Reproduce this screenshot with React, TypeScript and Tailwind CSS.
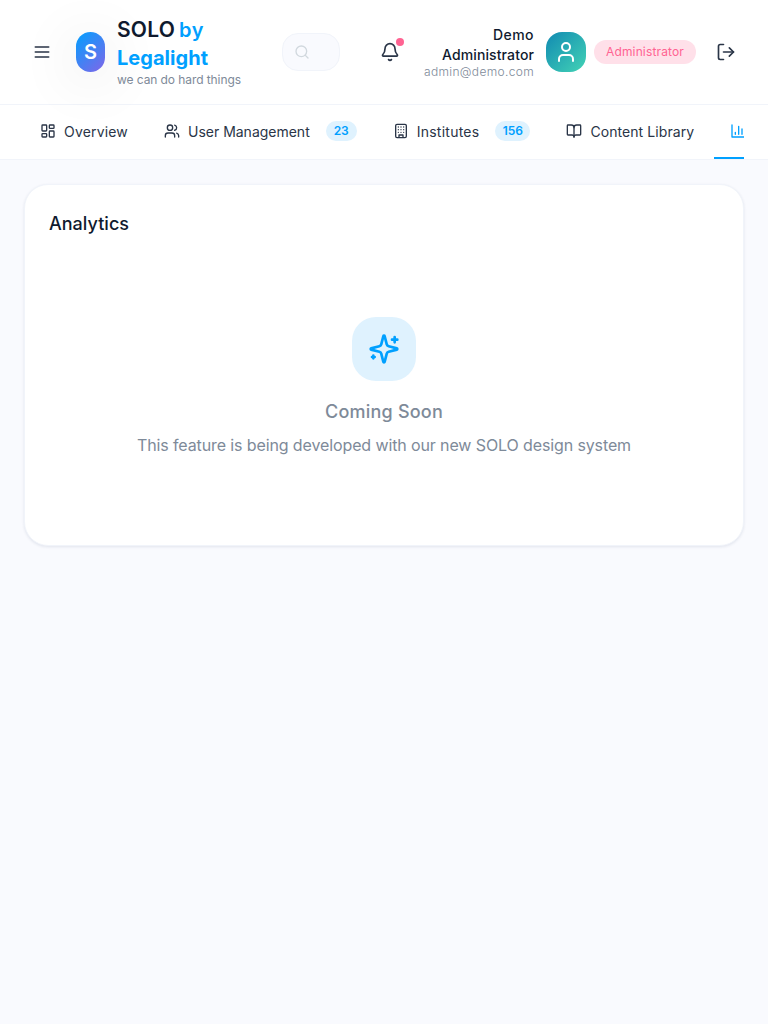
import React from "react";
import { Search, Bell, User, LogOut, LayoutDashboard, Users, BookOpen } from "lucide-react";

type TextProps = { children: React.ReactNode; w: number; size: number; className?: string; right?: boolean };

/* Single line of text fitted to a fixed measure. */
function Line({ children, w, size, className = "", right }: TextProps) {
  const ref = React.useRef<HTMLSpanElement>(null);
  const [ls, setLs] = React.useState(0);
  React.useLayoutEffect(() => {
    const el = ref.current;
    if (!el) return;
    const n = (el.textContent || "").length;
    setLs((w - el.getBoundingClientRect().width) / n);
  }, [w]);
  return (
    <span className={`flex shrink-0 whitespace-nowrap ${right ? "justify-end" : ""} ${className}`} style={{ width: w }}>
      <span ref={ref} className="block shrink-0" style={{ fontSize: size, letterSpacing: ls }}>{children}</span>
    </span>
  );
}

function Stroke({ d, className = "size-4" }: { d: string; className?: string }) {
  return (
    <svg className={`shrink-0 ${className}`} viewBox="0 0 24 24" fill="none" stroke="currentColor" strokeWidth="2" strokeLinecap="round" strokeLinejoin="round">
      <path d={d} />
    </svg>
  );
}

const MENU = "M4 6h16M4 12h16M4 18h16";
const BUILDING = "M6 2h12a2 2 0 0 1 2 2v16a2 2 0 0 1-2 2H6a2 2 0 0 1-2-2V4a2 2 0 0 1 2-2zM9 22v-4h6v4M8 6h.01M16 6h.01M12 6h.01M12 10h.01M12 14h.01M16 10h.01M16 14h.01M8 10h.01M8 14h.01";
const CHART = "M3 3v18h18M18 17V9M13 17V5M8 17v-3";
const SPARKLES = "M9.937 15.5A2 2 0 0 0 8.5 14.063l-6.135-1.582a.5.5 0 0 1 0-.962L8.5 9.936A2 2 0 0 0 9.937 8.5l1.582-6.135a.5.5 0 0 1 .963 0L14.063 8.5A2 2 0 0 0 15.5 9.937l6.135 1.581a.5.5 0 0 1 0 .964L15.5 14.063a2 2 0 0 0-1.437 1.437l-1.582 6.135a.5.5 0 0 1-.963 0zM20 3v4M22 5h-4M4 17v2M5 18H3";

function Tab({ icon, label, w, badge, bw, active }: { icon: React.ReactNode; label: string; w: number; badge?: string; bw?: number; active?: boolean }) {
  return (
    <button className={`flex h-[54px] shrink-0 items-center border-b-2 px-4 ${active ? "border-[#00a0ff] text-[#00a0ff]" : "border-transparent text-[#2a3547]"}`}>
      {icon}
      <Line w={w} size={14} className="ml-2 pt-px leading-5">{label}</Line>
      {badge && (
        <span className="ml-4 flex h-5 items-center justify-center rounded-full bg-[#dff2fe] text-xs font-semibold text-[#00a0ff]" style={{ width: bw }}>
          {badge}
        </span>
      )}
    </button>
  );
}

export default function App() {
  return (
    <div className="min-h-screen overflow-hidden bg-[#f9fafe] font-['Inter',sans-serif] text-[#0f1a2e]">
      <header className="flex h-[105px] items-center border-b border-[#f1f4fa] bg-white px-8">
        <Stroke d={MENU} className="size-5 text-[#2a3547]" />
        <div className="ml-6 flex h-10 w-[29px] shrink-0 items-center justify-center rounded-2xl bg-[linear-gradient(135deg,#00a0ff,#8165e8)] text-xl font-semibold text-white shadow-[0_8px_60px_rgba(0,0,0,0.14)]">
          S
        </div>
        <div className="ml-3 w-[153px] shrink-0">
          <div className="flex gap-1 font-semibold leading-7">
            <Line w={58} size={21}>SOLO</Line>
            <Line w={25} size={20} className="text-[#00a0ff]">by</Line>
          </div>
          <Line w={91} size={20} className="font-bold leading-7 text-[#00a0ff]">Legalight</Line>
          <Line w={124} size={12} className="leading-4 text-[#7e8a99]">we can do hard things</Line>
        </div>
        <div className="ml-3 flex h-[38px] w-[58px] shrink-0 items-center rounded-2xl border border-[#f1f4fa] bg-[#f9fafe] pl-[11px]">
          <Search size={16} className="text-[#d1d8de]" />
        </div>
        <div className="relative ml-10 shrink-0">
          <Bell size={20} className="text-[#2a3547]" />
          <span className="absolute -right-1 -top-1 size-2 rounded-full bg-[#ff6392]" />
        </div>
        <div className="ml-6 flex w-[110px] shrink-0 flex-col items-end pb-px">
          <Line w={41} size={14} right className="font-medium leading-5">Demo</Line>
          <Line w={92} size={14} right className="font-medium leading-5">Administrator</Line>
          <Line w={110} size={12} right className="font-light leading-[14px] text-[#7e8a99]">admin@demo.com</Line>
        </div>
        <div className="ml-3 flex size-10 shrink-0 items-center justify-center rounded-2xl bg-[linear-gradient(135deg,#118ab2,#43d3b5)]">
          <User size={24} className="text-white" />
        </div>
        <div className="ml-2 flex h-6 w-[102px] shrink-0 items-center justify-center rounded-full bg-[#ffe0e9] text-[#ff6392]">
          <Line w={78} size={12} className="leading-4">Administrator</Line>
        </div>
        <LogOut size={20} className="ml-5 shrink-0 text-[#2a3547]" />
      </header>

      <nav className="h-[55px] border-b border-[#f1f4fa] bg-white px-6">
        <div className="flex gap-1 overflow-hidden">
          <Tab icon={<LayoutDashboard size={16} />} label="Overview" w={64} />
          <Tab icon={<Users size={16} />} label="User Management" w={121.7} badge="23" bw={31} />
          <Tab icon={<Stroke d={BUILDING} />} label="Institutes" w={62.7} badge="156" bw={35} />
          <Tab icon={<BookOpen size={16} />} label="Content Library" w={103.8} />
          <Tab icon={<Stroke d={CHART} />} label="Analytics" w={62} active />
        </div>
      </nav>

      <main className="p-6">
        <section className="h-[362px] rounded-3xl border border-[#f1f4fa] bg-white p-6 shadow-[0_1px_3px_rgba(15,40,90,0.10)]">
          <h2 className="font-medium leading-7"><Line w={80} size={18} className="pt-px">Analytics</Line></h2>
          <div className="mt-[79px] flex flex-col items-center text-[#7e8a99]">
            <div className="flex size-16 items-center justify-center rounded-3xl bg-[#dff2fe] text-[#00a0ff]">
              <Stroke d={SPARKLES} className="size-8" />
            </div>
            <Line w={118} size={18} className="mt-[17px] font-medium leading-7">Coming Soon</Line>
            <Line w={494} size={16} className="mt-[7px] leading-6">This feature is being developed with our new SOLO design system</Line>
          </div>
        </section>
      </main>
    </div>
  );
}
